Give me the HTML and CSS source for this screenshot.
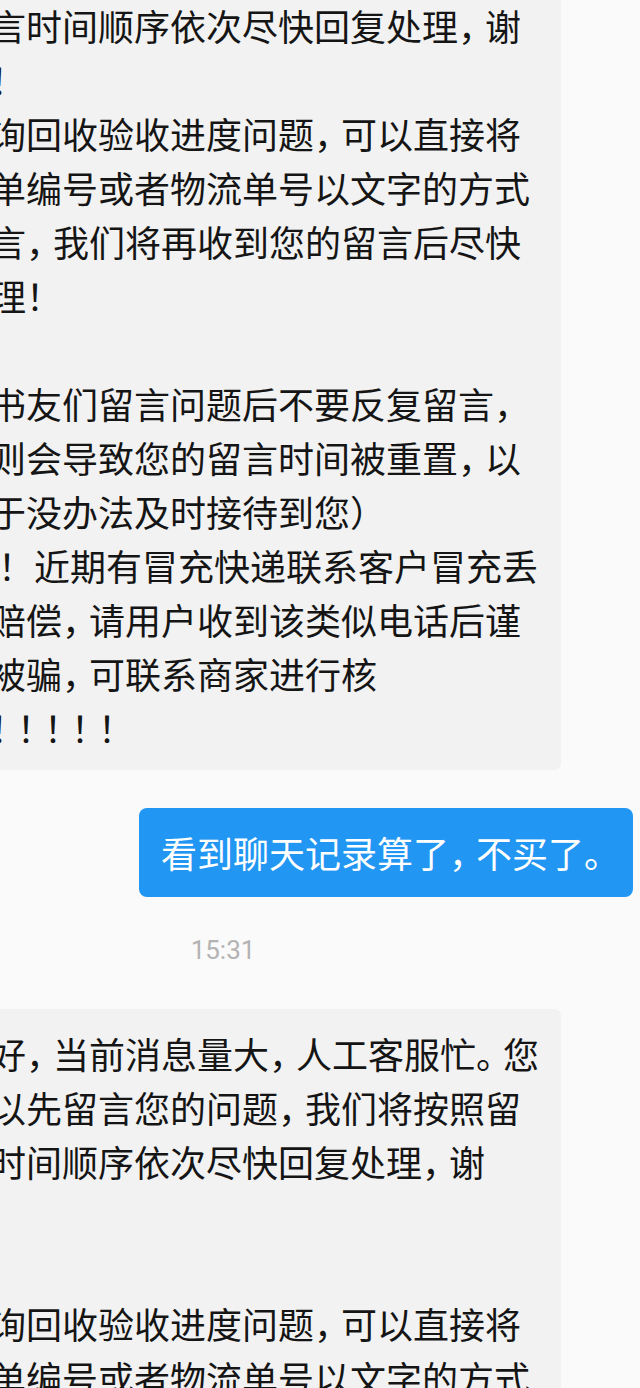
FILE: index.html
```html
<!DOCTYPE html>
<html lang="zh-CN">
<head>
  <meta charset="UTF-8">
  <meta name="viewport" content="width=device-width, initial-scale=1.0">
  <title>客服消息</title>
  <link rel="stylesheet" href="styles.css">
</head>
<body>
  <div class="chat">
    <div class="msg msg-in">
      <div class="bubble bubble-in">
        <div class="line">您好<span class="pn">，</span>当前消息量大<span class="pn">，</span>人工客服忙<span class="pn">。</span></div>
        <div class="line">您可以先留言您的问题<span class="pn">，</span>我们将按照</div>
        <div class="line">留言时间顺序依次尽快回复处理<span class="pn">，</span>谢</div>
        <div class="line">谢<span class="pn">！</span></div>
        <div class="line">查询回收验收进度问题<span class="pn">，</span>可以直接将</div>
        <div class="line">订单编号或者物流单号以文字的方式</div>
        <div class="line">留言<span class="pn">，</span>我们将再收到您的留言后尽快</div>
        <div class="line">处理！</div>
        <div class="line"></div>
        <div class="line">请书友们留言问题后不要反复留言<span class="pn">，</span></div>
        <div class="line">否则会导致您的留言时间被重置<span class="pn">，</span>以</div>
        <div class="line">至于没办法及时接待到您）</div>
        <div class="line">意 ！近期有冒充快递联系客户冒充丢</div>
        <div class="line">件赔偿<span class="pn">，</span>请用户收到该类似电话后谨</div>
        <div class="line">防被骗<span class="pn">，</span>可联系商家进行核</div>
        <div class="line">实<span class="pn">！！！！！</span></div>
      </div>
    </div>

    <div class="msg msg-out">
      <div class="bubble bubble-out">看到聊天记录算了<span class="pn">，</span>不买了<span class="pn">。</span></div>
    </div>

    <div class="time">15:31</div>

    <div class="msg msg-in">
      <div class="bubble bubble-in">
        <div class="line">您好<span class="pn">，</span>当前消息量大<span class="pn">，</span>人工客服忙<span class="pn">。</span>您</div>
        <div class="line">可以先留言您的问题<span class="pn">，</span>我们将按照留</div>
        <div class="line">言时间顺序依次尽快回复处理<span class="pn">，</span>谢</div>
        <div class="line">谢</div>
        <div class="line"></div>
        <div class="line">查询回收验收进度问题<span class="pn">，</span>可以直接将</div>
        <div class="line">订单编号或者物流单号以文字的方式</div>
        <div class="line">留言<span class="pn">，</span>我们将再收到您的留言后尽快</div>
        <div class="line">处理！</div>
      </div>
    </div>
  </div>
</body>
</html>
```

FILE: styles.css
```css
* { margin: 0; padding: 0; box-sizing: border-box; }
html, body { background: #fafafa; overflow: hidden; }
body { font-family: "Noto Sans CJK SC", "Noto Sans", sans-serif; color: #151515; }

/* the chat column is wider than the window and shifted left, as in the cropped capture */
.chat { width: 834px; margin: -127px 0 0 -194px; }

.msg { display: flex; }
.msg-in { padding-left: 124px; }
.msg-out { justify-content: flex-end; padding-right: 7px; margin-top: 38px; }

.bubble { font-size: 36px; line-height: 54px; border-radius: 8px; }
.bubble-in { width: 631px; background: #f2f2f2; padding: 17px 20px 16px 24px; box-shadow: 0 0 1px rgba(0,0,0,0.04); }
.bubble-out { background: #2196f3; color: #fff; padding: 17px 22px 18px 22px; white-space: nowrap; }

.line { height: 54px; white-space: nowrap; }
.pn { letter-spacing: -9px; }

.time { text-align: center; font-family: Roboto, "Liberation Sans", sans-serif; font-size: 26px; line-height: 30px; color: #b3b3b3; margin: 38px 0 44px; }
```
